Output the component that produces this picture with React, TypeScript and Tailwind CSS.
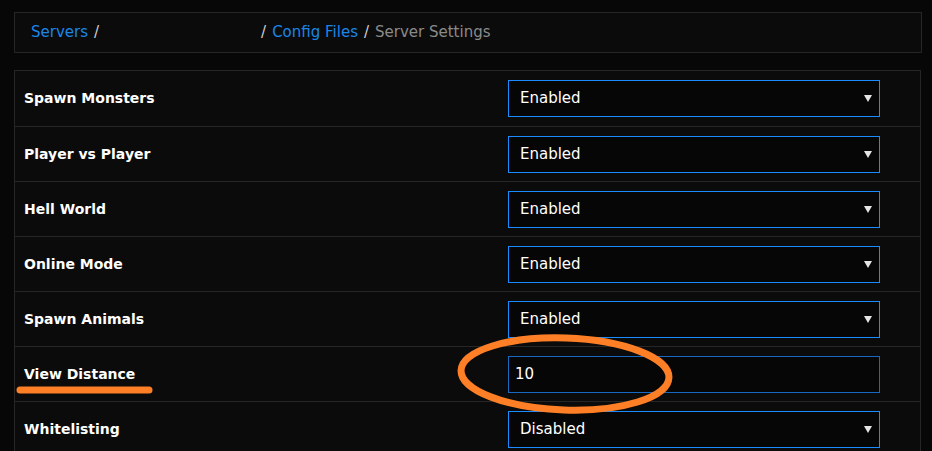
import React from 'react'

const rows = [
  { label: 'Spawn Monsters', value: 'Enabled', type: 'select' },
  { label: 'Player vs Player', value: 'Enabled', type: 'select' },
  { label: 'Hell World', value: 'Enabled', type: 'select' },
  { label: 'Online Mode', value: 'Enabled', type: 'select' },
  { label: 'Spawn Animals', value: 'Enabled', type: 'select' },
  { label: 'View Distance', value: '10', type: 'input' },
  { label: 'Whitelisting', value: 'Disabled', type: 'select' },
]

function Caret() {
  return (
    <svg width="8" height="7" viewBox="0 0 8 7" className="shrink-0">
      <path d="M0 0 H8 L4 7 Z" fill="#e5e5e5" />
    </svg>
  )
}

export default function App() {
  return (
    <div
      className="relative h-[451px] w-[932px] overflow-hidden bg-[#070707] pt-[12px] pl-[14px] pr-[10px]"
      style={{ fontFamily: '"DejaVu Sans", "Noto Sans", sans-serif' }}
    >
      {/* Breadcrumb */}
      <div className="flex h-[41px] items-center border border-[#262626] bg-[#0b0b0b] pl-[16px] text-[15px] text-[#8a8a8a]">
        <span className="text-[#1a86e8]">Servers</span>
        <span className="ml-[6px] text-[#cfcfcf]">/</span>
        <span className="w-[162px]" />
        <span className="text-[#cfcfcf]">/</span>
        <span className="ml-[6px] text-[#1a86e8]">Config Files</span>
        <span className="ml-[6px] text-[#cfcfcf]">/</span>
        <span className="ml-[6px]">Server Settings</span>
      </div>

      {/* Settings table */}
      <div className="mt-[17px] mr-[1px] border border-[#262626] bg-[#0b0b0b]">
        {rows.map((r, i) => (
          <div
            key={r.label}
            className={`flex h-[55px] items-center pl-[9px] ${i > 0 ? 'border-t border-[#262626]' : ''}`}
          >
            <div className="flex-1 text-[14px] font-bold text-white">{r.label}</div>
            {r.type === 'select' ? (
              <div className="mr-[40px] flex h-[37px] w-[372px] items-center justify-between border border-[#1a8cff] bg-[#060606] pl-[11px] pr-[7px] text-[15px] text-white">
                <span>{r.value}</span>
                <Caret />
              </div>
            ) : (
              <div className="mr-[40px] flex h-[37px] w-[372px] items-center border border-[#1769c4] bg-[#060606] pl-[6px] text-[15px] text-white">
                {r.value}
              </div>
            )}
          </div>
        ))}
      </div>

      {/* Hand-drawn annotations */}
      <svg className="pointer-events-none absolute left-0 top-0" width="932" height="451">
        <ellipse
          cx="565"
          cy="374"
          rx="104"
          ry="36"
          fill="none"
          stroke="#ff7f27"
          strokeWidth="7"
          transform="rotate(2 565 374)"
        />
        <line x1="20" y1="390" x2="149" y2="390" stroke="#ff7f27" strokeWidth="7" strokeLinecap="round" />
      </svg>
    </div>
  )
}
